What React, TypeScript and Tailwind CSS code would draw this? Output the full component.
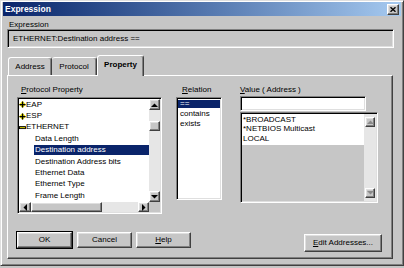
import React from "react";

const raised =
  "border border-t-white border-l-white border-r-[#404040] border-b-[#404040] shadow-[inset_-1px_-1px_0_#808080,inset_1px_1px_0_#dfdfdf] bg-[#c6c6c6]";
const sunken =
  "border border-t-[#808080] border-l-[#808080] border-r-white border-b-white shadow-[inset_1px_1px_0_#000,inset_-1px_-1px_0_#dfdfdf]";

type Dir = "up" | "down" | "left" | "right";

const Arrow: React.FC<{ dir: Dir; disabled?: boolean }> = ({ dir, disabled }) => {
  const pts: Record<Dir, string> = {
    up: "0,4 7,4 3.5,0.5",
    down: "0,0 7,0 3.5,3.5",
    left: "4,0 4,7 0.5,3.5",
    right: "0,0 0,7 3.5,3.5",
  };
  const vertical = dir === "up" || dir === "down";
  return (
    <svg width={vertical ? 7 : 4} height={vertical ? 4 : 7} viewBox={vertical ? "0 0 7 4" : "0 0 4 7"}>
      <polygon points={pts[dir]} fill={disabled ? "#8a8a8a" : "#000"} />
    </svg>
  );
};

const ScrollBtn: React.FC<{ dir: Dir; className: string; disabled?: boolean }> = ({ dir, className, disabled }) => (
  <div className={`${raised} ${className} flex items-center justify-center shrink-0`}>
    <Arrow dir={dir} disabled={disabled} />
  </div>
);

const PlusIcon = () => (
  <svg width="7" height="7" viewBox="0 0 7 7" className="shrink-0">
    <polygon points="3.5,0 7,3.5 3.5,7 0,3.5" fill="#e8e000" />
    <rect x="0.5" y="3" width="6" height="1.3" fill="#000" />
    <rect x="2.9" y="0.5" width="1.3" height="6" fill="#000" />
  </svg>
);

const MinusIcon = () => (
  <svg width="7" height="7" viewBox="0 0 7 7" className="shrink-0">
    <rect x="0.5" y="2.6" width="6" height="2" fill="#c8c000" stroke="#000" strokeWidth="0.9" />
  </svg>
);

const Btn: React.FC<{ children: React.ReactNode; className: string; isDefault?: boolean }> = ({
  children,
  className,
  isDefault,
}) => (
  <div className={`${isDefault ? "outline outline-1 outline-black" : ""} ${className}`}>
    <div className={`${raised} w-full h-full flex items-center justify-center`}>{children}</div>
  </div>
);

export default function App() {
  const tree = [
    { label: "EAP", icon: "plus" },
    { label: "ESP", icon: "plus" },
    { label: "ETHERNET", icon: "minus" },
    { label: "Data Length" },
    { label: "Destination address", selected: true },
    { label: "Destination Address bits" },
    { label: "Ethernet Data" },
    { label: "Ethernet Type" },
    { label: "Frame Length" },
  ];

  return (
    <div className="w-[404px] h-[268px] bg-[#c6c6c6] font-['Liberation_Sans',Arial,sans-serif] text-[8px] text-black leading-none overflow-hidden">
      <div className="w-[404px] h-[266px] border border-t-[#dfdfdf] border-l-[#dfdfdf] border-r-[#404040] border-b-[#404040] shadow-[inset_1px_1px_0_#fff,inset_-1px_-1px_0_#808080] p-[1px] flex flex-col">
        {/* title bar */}
        <div className="h-[14px] mx-[1px] bg-gradient-to-r from-[#0a246a] to-[#a6caf0] flex items-center justify-between">
          <span className="pl-[2px] text-white font-bold text-[8.5px]">Expression</span>
          <div className={`${raised} w-[12px] h-[11px] mr-[2px] flex items-center justify-center`}>
            <svg width="6" height="5" viewBox="0 0 6 5">
              <path d="M0.5 0.3 L5.5 4.7 M5.5 0.3 L0.5 4.7" stroke="#000" strokeWidth="1.4" />
            </svg>
          </div>
        </div>

        <div className="px-[5px] flex flex-col">
          <div className="mt-[5px] ml-[2px] h-[8px] leading-[8px]">Expression</div>
          <div className={`${sunken} w-[387px] h-[19px] flex items-center pl-[5px] text-[8px]`}>
            ETHERNET:Destination address ==
          </div>

          {/* tabs */}
          <div className="mt-[7px] h-[20px] flex items-end pl-[1px] relative z-10">
            <div className="w-[44px] h-[18px] border-t border-l border-r border-t-white border-l-white border-r-[#404040] rounded-t-[3px] flex items-center justify-center shadow-[inset_-1px_0_0_#808080]">
              Address
            </div>
            <div className="w-[45px] h-[18px] border-t border-r border-t-white border-r-[#404040] rounded-t-[3px] flex items-center justify-center shadow-[inset_-1px_0_0_#808080]">
              Protocol
            </div>
            <div className="w-[47px] h-[21px] -mb-[1px] bg-[#c6c6c6] border-t border-l border-r border-t-white border-l-white border-r-[#404040] rounded-t-[3px] flex items-center justify-center font-bold shadow-[inset_-1px_0_0_#808080] pb-[2px]">
              Property
            </div>
          </div>

          {/* panel */}
          <div className="w-[386px] h-[184px] border border-t-white border-l-white border-r-[#404040] border-b-[#404040] shadow-[inset_-1px_-1px_0_#808080] flex flex-col">
            <div className="flex items-start pt-[10px] pl-[9px]">
              {/* protocol property */}
              <div className="flex flex-col">
                <div className="ml-[4px] h-[9px]">
                  <span className="underline">P</span>rotocol Property
                </div>
                <div className={`${sunken} mt-[2px] w-[145px] h-[117px] bg-white p-[1px] flex flex-col`}>
                  <div className="flex h-[103px]">
                    <div className="flex-1 overflow-hidden flex flex-col">
                      {tree.map((t, i) => (
                        <div key={i} className="h-[11.4px] shrink-0 flex items-center">
                          {t.icon ? (
                            <div className="flex items-center">
                              {t.icon === "plus" ? <PlusIcon /> : <MinusIcon />}
                              <span>{t.label}</span>
                            </div>
                          ) : (
                            <div
                              className={`ml-[15px] flex-1 h-[10px] flex items-center px-[1px] ${
                                t.selected ? "bg-[#0a246a] text-white" : ""
                              }`}
                            >
                              {t.label}
                            </div>
                          )}
                        </div>
                      ))}
                    </div>
                    <div className="w-[11px] flex flex-col bg-[#e6e6e6]">
                      <ScrollBtn dir="up" className="h-[11px]" />
                      <div className="h-[11px]" />
                      <div className={`${raised} h-[10px]`} />
                      <div className="flex-1" />
                      <ScrollBtn dir="down" className="h-[11px]" />
                    </div>
                  </div>
                  <div className="flex h-[10px]">
                    <ScrollBtn dir="left" className="w-[12px]" />
                    <div className={`${raised} w-[71px]`} />
                    <div className="flex-1 bg-[#e6e6e6]" />
                    <ScrollBtn dir="right" className="w-[11px]" />
                    <div className="w-[11px] bg-[#c6c6c6]" />
                  </div>
                </div>
              </div>

              {/* relation */}
              <div className="flex flex-col ml-[14px]">
                <div className="ml-[6px] h-[9px]">
                  <span className="underline">R</span>elation
                </div>
                <div className={`${sunken} mt-[2px] w-[46px] h-[103px] bg-white pt-[1px] px-[1px]`}>
                  <div className="h-[8px] mt-[1px] bg-[#0a246a] text-white flex items-center pl-[2px]">==</div>
                  <div className="h-[10px] flex items-center pl-[2px] mt-[1px]">contains</div>
                  <div className="h-[9px] flex items-center pl-[2px]">exists</div>
                </div>
              </div>

              {/* value */}
              <div className="flex flex-col ml-[18px]">
                <div className="h-[9px]">
                  <span className="underline">V</span>alue ( Address )
                </div>
                <div className={`${sunken} mt-[1px] w-[126px] h-[15px] bg-white`} />
                <div className={`${sunken} mt-[1px] w-[138px] h-[91px] bg-[#c6c6c6] p-[1px] flex`}>
                  <div className="flex-1 flex flex-col">
                    <div className="bg-white flex flex-col pt-[1px] pb-[1px] pl-[1px]">
                      <div className="h-[9.5px] flex items-center">*BROADCAST</div>
                      <div className="h-[9.5px] flex items-center">*NETBIOS Multicast</div>
                      <div className="h-[10px] flex items-center">LOCAL</div>
                    </div>
                  </div>
                  <div className="w-[12px] flex flex-col bg-[#e6e6e6] py-[3px] px-[1px]">
                    <ScrollBtn dir="up" className="h-[10px]" disabled />
                    <div className="flex-1" />
                    <ScrollBtn dir="down" className="h-[10px]" disabled />
                  </div>
                </div>
              </div>
            </div>

            {/* buttons */}
            <div className="flex items-start mt-[18px] pl-[9px] pr-[10px]">
              <Btn className="w-[55px] h-[16px]" isDefault>
                OK
              </Btn>
              <Btn className="w-[55px] h-[16px] ml-[5px]">Cancel</Btn>
              <Btn className="w-[55px] h-[16px] ml-[4px]">
                <span>
                  <span className="underline">H</span>elp
                </span>
              </Btn>
              <Btn className="w-[78px] h-[18px] ml-auto mt-[2px]">
                <span>
                  <span className="underline">E</span>dit Addresses...
                </span>
              </Btn>
            </div>
          </div>
        </div>
      </div>
    </div>
  );
}
